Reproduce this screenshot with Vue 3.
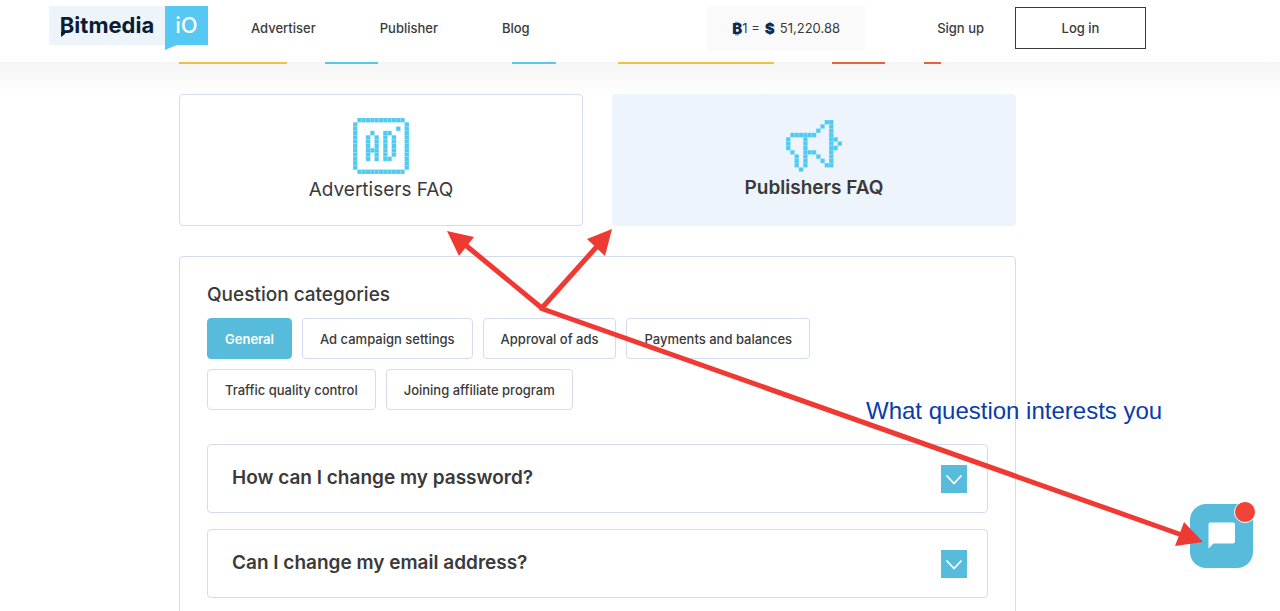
<script setup>
import { ref } from 'vue'

const adPixels = [
  ' ########### ',
  '#           #',
  '#         # #',
  '#   #  ##   #',
  '#  # # # #  #',
  '#  # # # #  #',
  '#  # # # #  #',
  '#  ### # #  #',
  '#  # # # #  #',
  '#  # # ##   #',
  '#           #',
  '#           #',
  ' ########### ',
]
const hornPixels = [
  '         ##  ',
  '        # #  ',
  '       #  #  ',
  ' ######   #  ',
  '#   #     ## ',
  '#   #     # #',
  '#   #     ## ',
  ' #  ###   #  ',
  '  # #  #  #  ',
  '  # #   # #  ',
  '  # #    ##  ',
  '   #         ',
]
const toCells = (rows) =>
  rows.flatMap((row, y) => [...row].map((c, x) => ({ x: x * 13, y: y * 13, on: c === '#' })).filter((c) => c.on))

const audiences = [
  { id: 'adv', label: 'Advertisers FAQ', cells: toCells(adPixels), rows: 13 },
  { id: 'pub', label: 'Publishers FAQ', cells: toCells(hornPixels), rows: 12 },
]
const audience = ref('pub')

const categories = [
  'General',
  'Ad campaign settings',
  'Approval of ads',
  'Payments and balances',
  'Traffic quality control',
  'Joining affiliate program',
]
const category = ref('General')

const questions = ['How can I change my password?', 'Can I change my email address?']
</script>

<template>
  <div class="page">
    <header class="header">
      <a href="#" class="logo" aria-label="Bitmedia iO">
        <span class="logo-name">Bitmedia
          <svg class="logo-tail" viewBox="0 0 4 5" aria-hidden="true"><path d="M0 0H4V2L0 5Z" fill="#0b1c33" /></svg>
        </span>
        <span class="logo-io">iO</span>
      </a>
      <nav class="nav">
        <a href="#">Advertiser</a>
        <a href="#">Publisher</a>
        <a href="#">Blog</a>
      </nav>
      <div class="ticker">
        <b class="coin">₿</b><span>1 =</span><b class="dollar">$</b><span>51,220.88</span>
      </div>
      <a href="#" class="signup">Sign up</a>
      <button type="button" class="login">Log in</button>
    </header>

    <main class="main">
      <div class="strips">
        <i class="yellow"></i><i></i><i class="blue"></i><i></i><i class="blue"></i><i></i>
        <i class="yellow"></i><i></i><i class="orange"></i><i></i><i class="orange"></i>
      </div>

      <div class="audiences">
        <button
          v-for="a in audiences"
          :key="a.id"
          type="button"
          class="audience"
          :class="{ active: audience === a.id }"
          @click="audience = a.id"
        >
          <svg class="pixel-icon" :viewBox="`0 0 169 ${a.rows * 13}`" aria-hidden="true">
            <rect v-for="(c, i) in a.cells" :key="i" :x="c.x" :y="c.y" width="13" height="13" />
          </svg>
          <span>{{ a.label }}</span>
        </button>
      </div>

      <section class="panel">
        <h2>Question categories</h2>
        <div class="categories">
          <button
            v-for="c in categories"
            :key="c"
            type="button"
            :class="{ active: category === c }"
            @click="category = c"
          >{{ c }}</button>
        </div>
        <div class="questions">
          <article v-for="q in questions" :key="q" class="question">
            <h3>{{ q }}</h3>
            <button type="button" class="toggle" :aria-label="q">
              <svg viewBox="0 0 26 28" aria-hidden="true">
                <path d="M5.500 10.500L13 18.500L20.500 10.500" fill="none" stroke="#fff" stroke-width="1.800" />
              </svg>
            </button>
          </article>
        </div>
      </section>
    </main>

    <button type="button" class="chat" aria-label="Chat">
      <svg viewBox="0 0 28 28" aria-hidden="true">
        <path d="M2 0.500H25Q27 0.500 27 2.500V19.500Q27 21.500 25 21.500H5.500L0.500 26.500V2.500Q0.500 0.500 2 0.500Z" fill="#fff" />
      </svg>
      <span class="badge"></span>
    </button>

    <svg class="arrows" viewBox="0 0 1280 611" aria-hidden="true">
      <g stroke="#ef3a34" stroke-width="5" fill="none">
        <path d="M463 243L543 309" />
        <path d="M600 243L541 309" />
        <path d="M540 308L1182 535" />
      </g>
      <g fill="#ef3a34">
        <path d="M447 231L474 237L459 256Z" />
        <path d="M612 229L605 256L587 239Z" />
        <path d="M1203 542L1184 522L1175 546Z" />
      </g>
    </svg>
    <p class="note">What question interests you</p>
  </div>
</template>

<style>
body {
  margin: 0;
  background: #fff;
}
</style>

<style scoped>
.page {
  position: relative;
  height: 100vh;
  overflow: hidden;
  font-family: Inter, "Liberation Sans", sans-serif;
  font-size: 14px;
  color: #3a3a3a;
}
a {
  color: inherit;
  text-decoration: none;
}
button {
  font: inherit;
  color: inherit;
  padding: 0;
  cursor: pointer;
}
.header {
  position: relative;
  box-sizing: border-box;
  height: 62px;
  padding: 0 134px 6px 49px;
  display: flex;
  align-items: center;
  font-size: 13px;
}
.header::after {
  content: "";
  position: absolute;
  z-index: -1;
  left: 0;
  right: 0;
  top: 100%;
  height: 34px;
  background: linear-gradient(#f5f5f5, #fff);
}
.logo {
  display: flex;
  height: 44px;
}
.logo-name {
  position: relative;
  box-sizing: border-box;
  width: 116px;
  height: 39px;
  background: #edf5fb;
  color: #0b1c33;
  font-size: 22px;
  line-height: 39px;
  font-weight: 700;
  text-align: center;
}
.logo-tail {
  position: absolute;
  left: 12px;
  bottom: 8px;
  width: 4px;
  height: 5px;
}
.logo-io {
  width: 43px;
  background: #55c8f3;
  clip-path: polygon(0 0, 100% 0, 100% 39px, 12px 39px, 0 100%);
  color: #fff;
  font-size: 22px;
  line-height: 39px;
  font-weight: 500;
  text-align: center;
}
.nav {
  display: flex;
  gap: 64px;
  margin-left: 43px;
  font-weight: 500;
}
.ticker {
  display: flex;
  align-items: center;
  justify-content: center;
  width: 158px;
  height: 45px;
  margin-left: auto;
  background: #fafafa;
}
.coin,
.dollar {
  font-size: 15px;
  font-weight: 900;
  color: #12294b;
}
.dollar {
  margin: 0 5px;
}
.signup {
  margin: 0 31px 0 72px;
  font-weight: 500;
}
.login {
  width: 131px;
  height: 42px;
  border: 1px solid #3a3a3a;
  background: #fff;
  font-weight: 500;
}
.main {
  padding: 0 264px 0 179px;
}
.strips {
  display: grid;
  grid-template-columns: 108fr 38fr 53fr 134fr 44fr 62fr 155fr 58fr 53fr 39fr 17fr;
  width: 91%;
  height: 2px;
}
.yellow {
  background: #f0c048;
}
.blue {
  background: #58c7ea;
}
.orange {
  background: #e2663a;
}
.audiences {
  display: grid;
  grid-template-columns: 1fr 1fr;
  gap: 29px;
  margin-top: 30px;
}
.audience {
  display: flex;
  flex-direction: column;
  align-items: center;
  gap: 4px;
  height: 132px;
  padding-top: 23px;
  border: 1px solid #d3dcef;
  border-radius: 4px;
  background: #fff;
  font-size: 19px;
  line-height: 24px;
}
.audience.active {
  background: #edf4fb;
  border-color: #edf4fb;
  font-weight: 600;
  padding-top: 25px;
}
.pixel-icon {
  width: 56px;
  fill: #4fcaf0;
  stroke: #a5e3f7;
  stroke-width: 1;
}
.panel {
  margin-top: 30px;
  padding: 26px 27px 28px;
  border: 1px solid #d3dcef;
  border-radius: 4px;
}
h2 {
  margin: 0;
  font-size: 19px;
  line-height: 24px;
  font-weight: 500;
}
.categories {
  display: flex;
  flex-wrap: wrap;
  gap: 10px;
  margin-top: 11px;
  padding-right: 150px;
}
.categories button {
  height: 41px;
  padding: 0 17px;
  border: 1px solid #d3dcef;
  border-radius: 4px;
  background: #fff;
  font-size: 13px;
  font-weight: 500;
}
.categories .active {
  background: #57bcdc;
  border-color: #57bcdc;
  color: #fff;
  font-weight: 600;
}
.questions {
  display: grid;
  gap: 16px;
  margin-top: 34px;
}
.question {
  display: flex;
  justify-content: space-between;
  align-items: flex-start;
  padding: 20px 20px 19px 24px;
  border: 1px solid #d3dcef;
  border-radius: 4px;
}
h3 {
  margin: 0;
  font-size: 19px;
  line-height: 26px;
  font-weight: 600;
}
.toggle {
  width: 26px;
  height: 28px;
  border: 0;
  background: #57bcdc;
}
.toggle svg {
  display: block;
}
.chat {
  position: absolute;
  right: 27px;
  bottom: 43px;
  width: 63px;
  height: 64px;
  border: 0;
  border-radius: 16px;
  background: #57bcdc;
}
.chat svg {
  display: block;
  width: 28px;
  margin: 0 auto;
}
.badge {
  position: absolute;
  top: -3px;
  right: -3px;
  width: 20px;
  height: 20px;
  border: 1px solid #fff;
  border-radius: 50%;
  background: #ef4437;
}
.arrows {
  position: absolute;
  top: 0;
  left: 0;
  width: 1280px;
  pointer-events: none;
}
.note {
  position: absolute;
  top: 397px;
  left: 866px;
  margin: 0;
  font: 24px/28px "Liberation Sans", Arial, sans-serif;
  color: #0a3caa;
  white-space: nowrap;
}
</style>
